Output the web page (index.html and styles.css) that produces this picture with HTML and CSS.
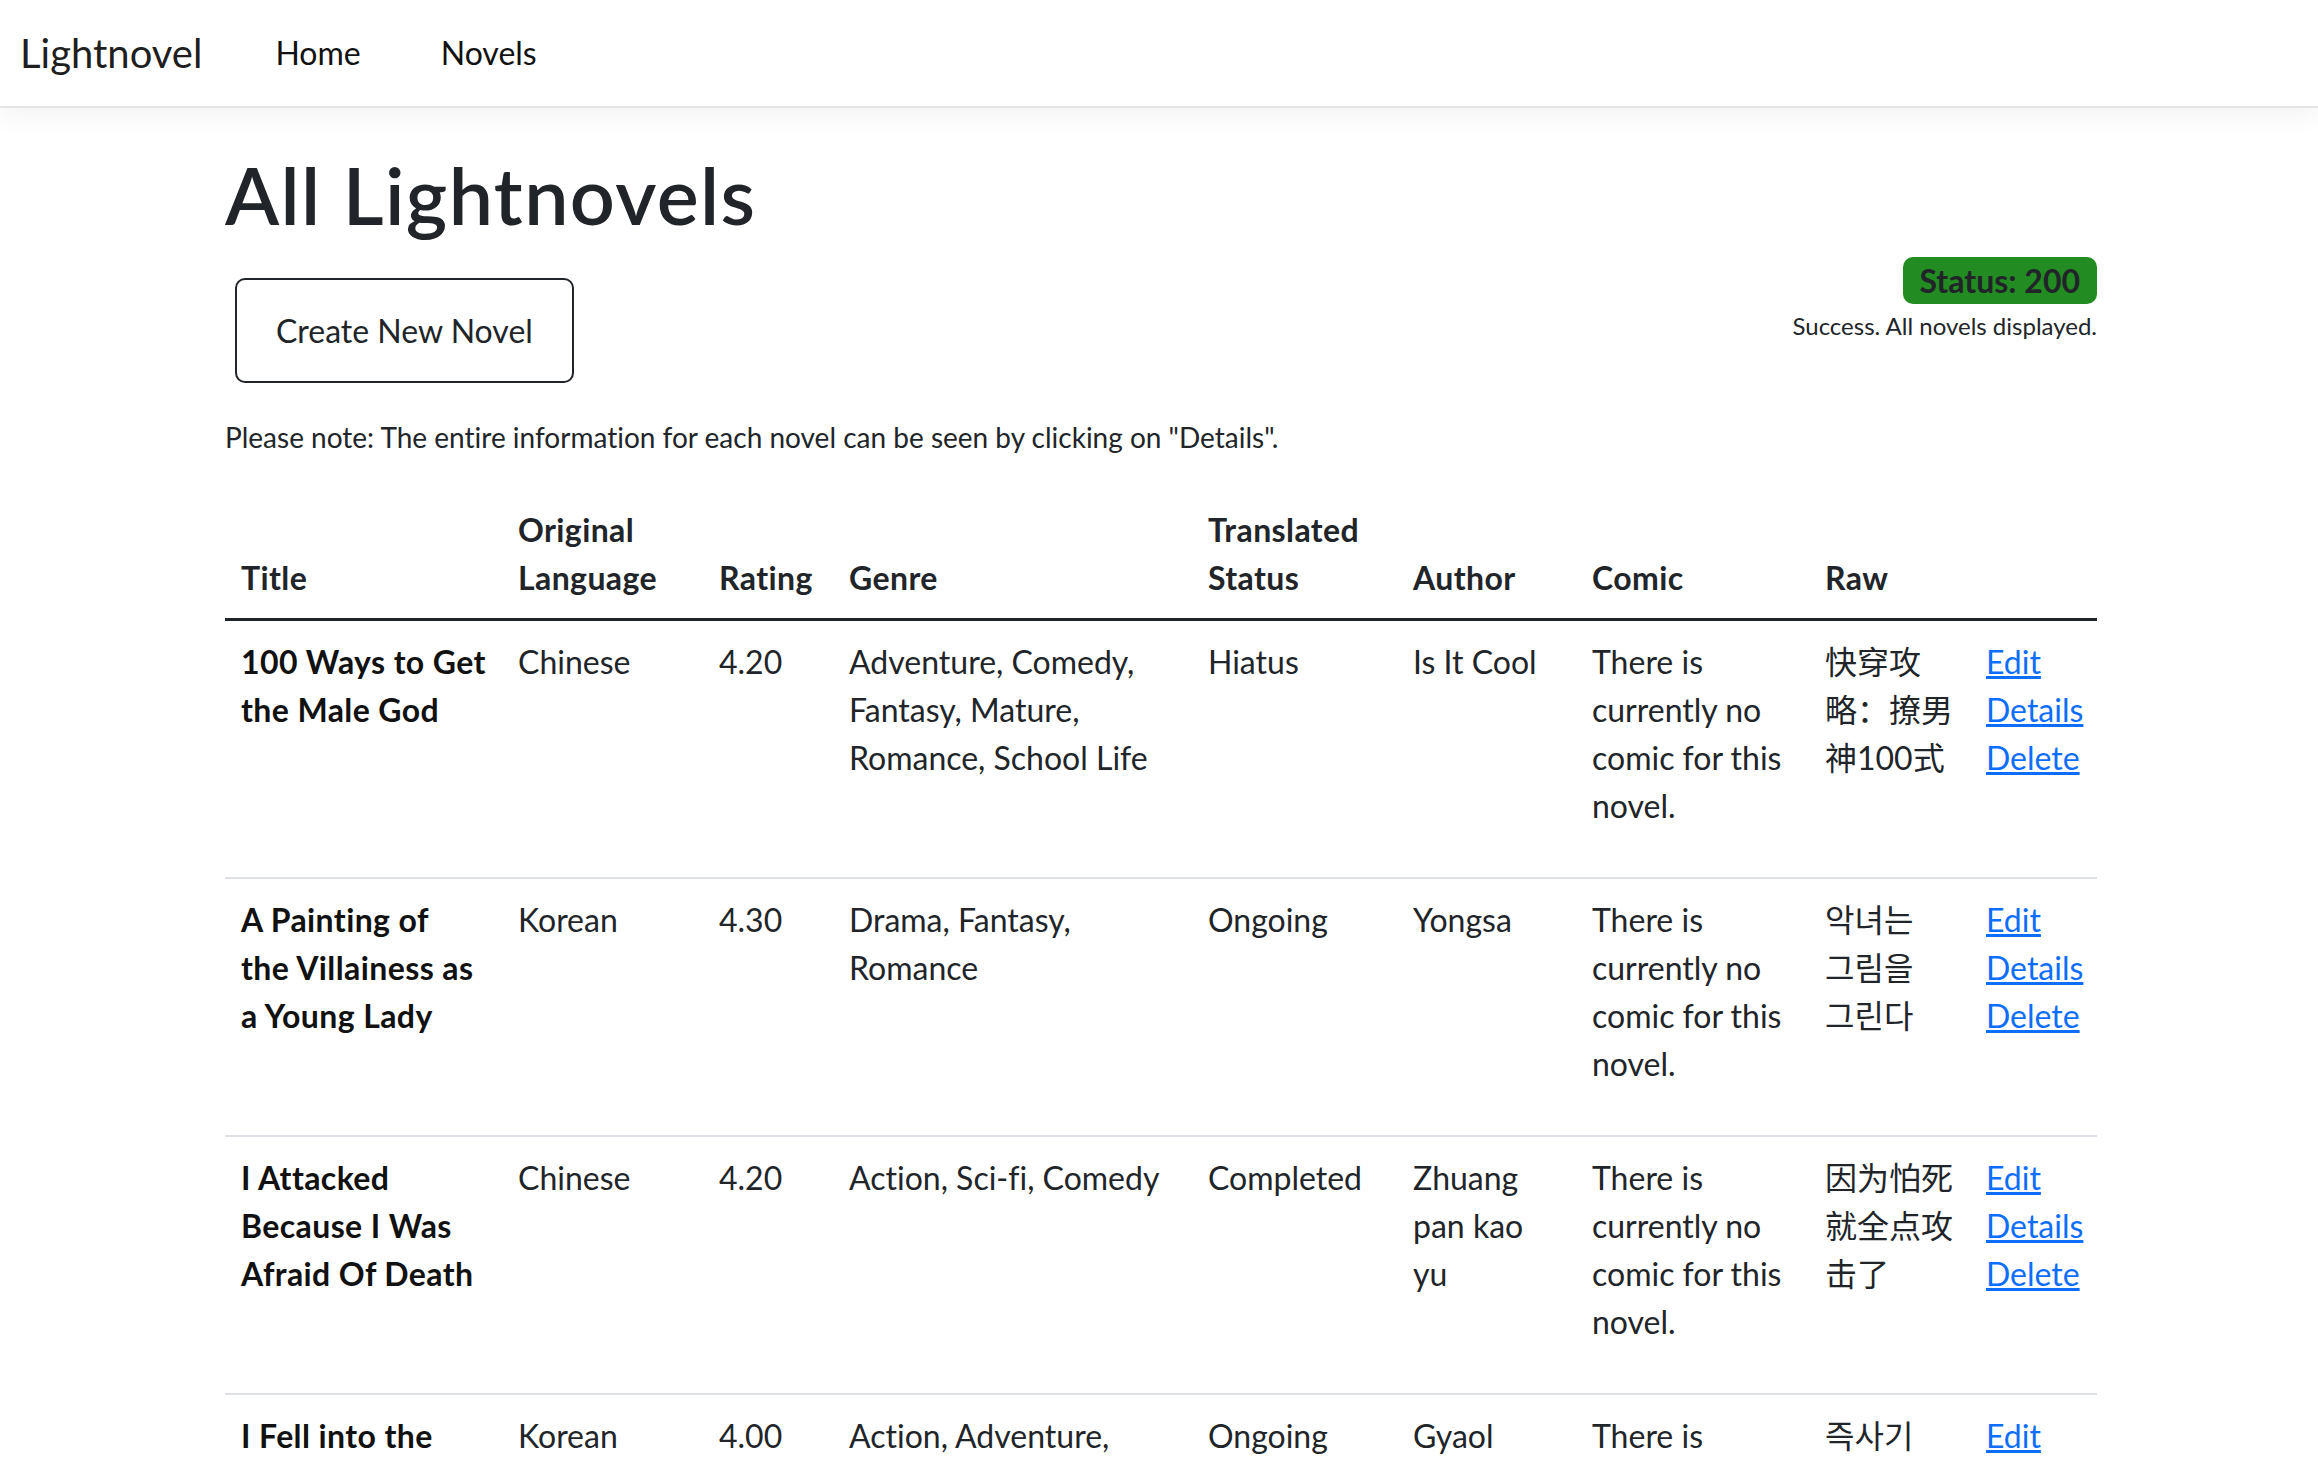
FILE: index.html
```html
<!DOCTYPE html>
<html lang="en">
<head>
<meta charset="utf-8">
<title>All Lightnovels - Lightnovel</title>
<link rel="stylesheet" href="styles.css">
</head>
<body>
<header class="navbar">
  <a class="brand" href="#">Lightnovel</a>
  <nav class="nav">
    <a class="nav-link" href="#">Home</a>
    <a class="nav-link" href="#">Novels</a>
  </nav>
</header>

<main class="container">
  <h1 class="page-title">All Lightnovels</h1>

  <div class="toolbar">
    <a class="btn-outline" href="#">Create New Novel</a>
    <div class="status">
      <span class="badge">Status: 200</span>
      <span class="status-msg">Success. All novels displayed.</span>
    </div>
  </div>

  <p class="note">Please note: The entire information for each novel can be seen by clicking on "Details".</p>

  <table class="table">
    <colgroup>
      <col class="c-title"><col class="c-lang"><col class="c-rating"><col class="c-genre"><col class="c-status"><col class="c-author"><col class="c-comic"><col class="c-raw"><col class="c-act">
    </colgroup>
    <thead>
      <tr>
        <th>Title</th>
        <th>Original Language</th>
        <th>Rating</th>
        <th>Genre</th>
        <th>Translated Status</th>
        <th>Author</th>
        <th>Comic</th>
        <th>Raw</th>
        <th></th>
      </tr>
    </thead>
    <tbody>
      <tr>
        <td class="title">100 Ways to Get the Male God</td>
        <td>Chinese</td>
        <td>4.20</td>
        <td>Adventure, Comedy, Fantasy, Mature, Romance, School Life</td>
        <td>Hiatus</td>
        <td>Is It Cool</td>
        <td>There is currently no comic for this novel.</td>
        <td class="raw" lang="zh-CN">快穿攻略：撩男神100式</td>
        <td class="actions"><a href="#">Edit</a> <a href="#">Details</a> <a href="#">Delete</a></td>
      </tr>
      <tr>
        <td class="title">A Painting of the&nbsp;Villainess as a Young Lady</td>
        <td>Korean</td>
        <td>4.30</td>
        <td>Drama, Fantasy, Romance</td>
        <td>Ongoing</td>
        <td>Yongsa</td>
        <td>There is currently no comic for this novel.</td>
        <td class="raw" lang="ko">악녀는 그림을 그린다</td>
        <td class="actions"><a href="#">Edit</a> <a href="#">Details</a> <a href="#">Delete</a></td>
      </tr>
      <tr>
        <td class="title">I Attacked Because I Was Afraid Of Death</td>
        <td>Chinese</td>
        <td>4.20</td>
        <td>Action, Sci-fi, Comedy</td>
        <td>Completed</td>
        <td>Zhuang pan kao yu</td>
        <td>There is currently no comic for this novel.</td>
        <td class="raw" lang="zh-CN">因为怕死就全点攻击了</td>
        <td class="actions"><a href="#">Edit</a> <a href="#">Details</a> <a href="#">Delete</a></td>
      </tr>
      <tr>
        <td class="title">I Fell into the Game with Instant Kill</td>
        <td>Korean</td>
        <td>4.00</td>
        <td>Action, Adventure, Fantasy</td>
        <td>Ongoing</td>
        <td>Gyaol</td>
        <td>There is currently no comic for this novel.</td>
        <td class="raw" lang="ko">즉사기 들고 게임 속에 떨어졌다</td>
        <td class="actions"><a href="#">Edit</a> <a href="#">Details</a> <a href="#">Delete</a></td>
      </tr>
    </tbody>
  </table>
</main>
</body>
</html>
```
FILE: styles.css
```css
* { box-sizing: border-box; }

html, body {
  margin: 0;
  padding: 0;
  background: #fff;
}

body {
  font-family: "Lato", "Noto Sans CJK SC", "Noto Sans CJK KR", sans-serif;
  font-size: 32px;
  line-height: 48px;
  color: #212529;
  font-variant-ligatures: none;
}

a { color: #0d6efd; }

/* ---------- navbar ---------- */
.navbar {
  display: flex;
  align-items: center;
  height: 108px;
  padding: 0 20px;
  background: #fff;
  border-bottom: 2px solid #e5e5e5;
  box-shadow: 0 8px 24px rgba(0, 0, 0, 0.05);
}

.brand {
  font-size: 40px;
  line-height: 60px;
  color: rgba(0, 0, 0, 0.9);
  text-decoration: none;
  margin-right: 33px;
}

.nav {
  display: flex;
}

.nav-link {
  font-size: 32px;
  line-height: 48px;
  padding: 0 40px;
  color: #111;
  text-decoration: none;
}

/* ---------- main ---------- */
.container {
  width: 1920px;
  margin: 0 auto;
  padding: 0 22px 0 26px;
}

.page-title {
  font-size: 79px;
  font-weight: 600;
  line-height: 95px;
  letter-spacing: 1.4px;
  margin: 39px 0 16px;
}

.toolbar {
  display: flex;
  justify-content: space-between;
  align-items: flex-start;
}

.btn-outline {
  display: inline-block;
  margin: 20px 0 0 10px;
  padding: 26px 39px;
  border: 2px solid #212529;
  border-radius: 10px;
  color: #212529;
  text-decoration: none;
  font-size: 32px;
  line-height: 49px;
}

.status {
  display: flex;
  flex-direction: column;
  align-items: flex-end;
  margin-top: -1px;
}

.badge {
  display: inline-block;
  background: #228b22;
  color: #212529;
  font-weight: 700;
  font-size: 32px;
  line-height: 31px;
  padding: 8px 17px;
  border-radius: 10px;
}

.status-msg {
  font-size: 24px;
  line-height: 36px;
  margin-top: 4px;
}

.note {
  font-size: 28px;
  line-height: 42px;
  margin: 33px 0 32px;
}

/* ---------- table ---------- */
.table {
  width: 1872px;
  table-layout: fixed;
  border-collapse: collapse;
}

.c-title { width: 277px; }
.c-lang { width: 201px; }
.c-rating { width: 130px; }
.c-genre { width: 359px; }
.c-status { width: 205px; }
.c-author { width: 179px; }
.c-comic { width: 233px; }
.c-raw { width: 161px; }
.c-act { width: 127px; }

.table th {
  text-align: left;
  vertical-align: bottom;
  font-weight: 700;
  letter-spacing: 0.4px;
  padding: 16px;
  border-bottom: 3px solid #212529;
}

.table td {
  vertical-align: top;
  padding: 17px 16px 47px;
  border-bottom: 2px solid #dee2e6;
}

.table td.title {
  font-weight: 700;
  letter-spacing: 0.4px;
  color: #111;
}

.table td.raw {
  line-break: strict;
}

.table td.raw:lang(ko) {
  word-break: keep-all;
}

.actions a {
  color: #0d6efd;
  text-decoration: underline;
}
```
